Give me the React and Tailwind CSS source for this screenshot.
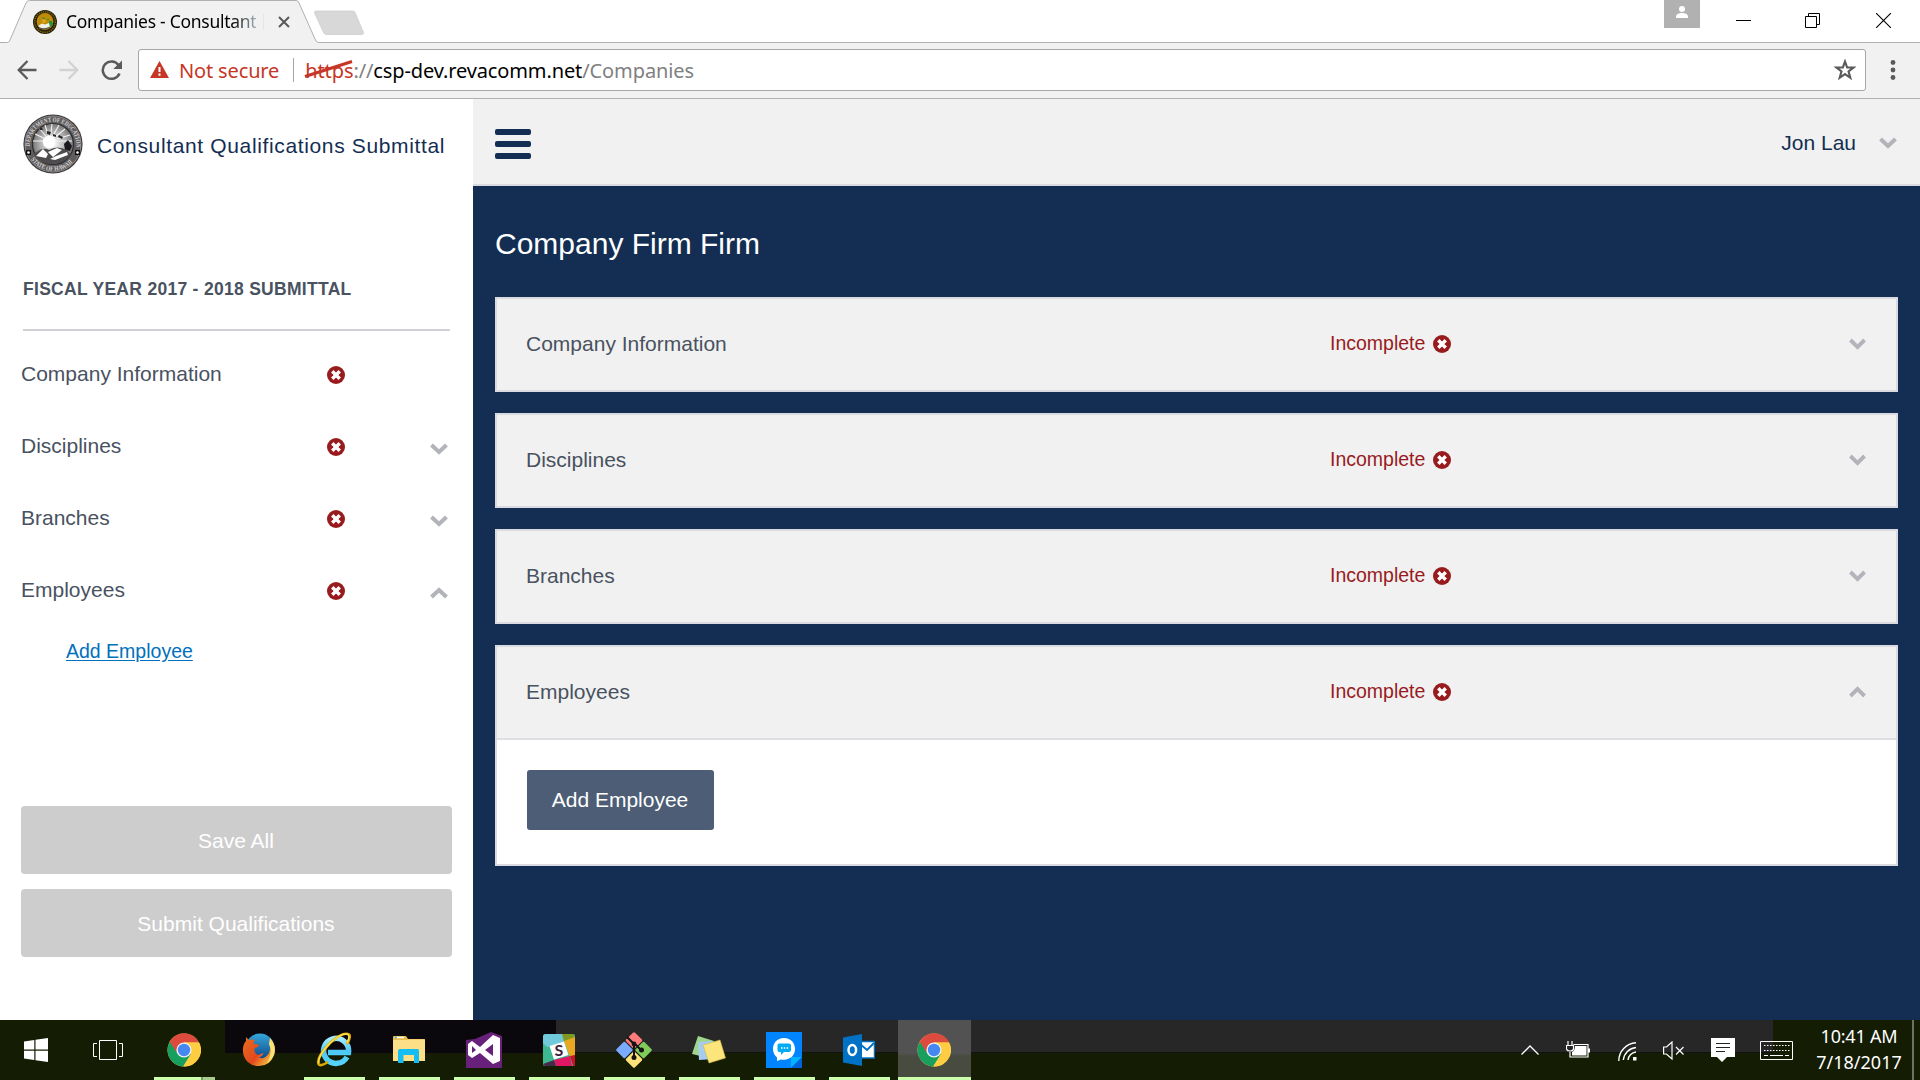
import React from "react";

const sections = [
  { name: "Company Information" },
  { name: "Disciplines", chevron: "down" },
  { name: "Branches", chevron: "down" },
  { name: "Employees", chevron: "up" },
];

function Chevron({ up, width = 18 }) {
  return (
    <svg width={width} height="12" viewBox="0 0 18 12" preserveAspectRatio="none" className={up ? "rotate-180" : ""}>
      <path d="M1.5 2 L9 9 L16.5 2" fill="none" stroke="#b2b4ba" strokeWidth="4" />
    </svg>
  );
}

function ErrorIcon() {
  return (
    <svg width="18" height="18" viewBox="0 0 18 18">
      <circle cx="9" cy="9" r="9" fill="#981b1e" />
      <path d="M5.3 5.3 L12.7 12.7 M12.7 5.3 L5.3 12.7" stroke="#fff" strokeWidth="3.5" />
      <path d="M9 3.6v2M9 12.4v2M3.6 9h2M12.4 9h2" stroke="#981b1e" strokeWidth="1.4" />
    </svg>
  );
}

function Seal() {
  return (
    <svg width="60" height="60" viewBox="0 0 60 60">
      <defs>
        <path id="sealTop" d="M7 34 A23.2 23.2 0 1 1 53 34" />
        <path id="sealBottom" d="M5 40 A27 27 0 0 0 55 40" />
        <radialGradient id="sealSky" cx=".5" cy=".5" r=".55">
          <stop offset="0" stopColor="#fff" />
          <stop offset=".55" stopColor="#b4b4b4" />
          <stop offset="1" stopColor="#666" />
        </radialGradient>
      </defs>
      <circle cx="30" cy="30" r="29.6" fill="#3c3a3b" />
      <circle cx="30" cy="30" r="28" fill="#5f5d5e" stroke="#99979a" strokeWidth=".8" />
      <text fontSize="6.5" fill="#d6d4d6" fontFamily="Liberation Serif, serif" fontWeight="bold">
        <textPath href="#sealTop" startOffset="2" textLength="76" lengthAdjust="spacingAndGlyphs">DEPARTMENT OF EDUCATION</textPath>
      </text>
      <text fontSize="6.5" fill="#d6d4d6" fontFamily="Liberation Serif, serif" fontWeight="bold">
        <textPath href="#sealBottom" startOffset="6" textLength="48" lengthAdjust="spacingAndGlyphs">STATE OF HAWAII</textPath>
      </text>
      <circle cx="30" cy="30" r="20.5" fill="url(#sealSky)" stroke="#2d2b2c" strokeWidth="1.2" />
      <g stroke="#f4f4f4" strokeWidth="1.1">
        <path d="M27 27 L12 20M27 27 L16 14M27 27 L22 11M27 27 L29 10M27 27 L36 11M27 27 L42 15M27 27 L47 21M27 27 L10 27M27 27 L49 27" />
      </g>
      <circle cx="26" cy="28" r="6.2" fill="#fff" />
      <path d="M16 14l3 0 1 2-3 0zM24 17l4 1-1 3-3-1zM30 20l3 1 0 2-3-1zM36 21l4 2-1 2-4-2z" fill="#2a282a" />
      <path d="M41 30 L45 26 L49 32 L47 37 L42 36Z" fill="#1b191b" />
      <path d="M11 40 Q20 32 26 36 Q34 31 44 36 L48 41 Q40 51 26 50 Q14 48 11 40Z" fill="#4d4b4d" />
      <path d="M13 42 L20 35 L25 40 L23 44Z M25 38 L34 34 L39 36 L30 43Z M27 45 L33 42 L44 38 L45 41 L32 46Z" fill="#fff" />
      <rect x="3" y="36" width="5" height="5" fill="#111" />
      <rect x="52" y="36" width="5" height="5" fill="#111" />
      <circle cx="5.5" cy="38.5" r="1.3" fill="#fff" />
      <circle cx="54.5" cy="38.5" r="1.3" fill="#fff" />
    </svg>
  );
}

function Favicon() {
  return (
    <svg width="24" height="24" viewBox="0 0 24 24">
      <circle cx="12" cy="12" r="12" fill="#26200a" />
      <circle cx="12" cy="12" r="10.3" fill="none" stroke="#8a6a14" strokeWidth="1.4" strokeDasharray="1.2 1" />
      <circle cx="12" cy="11.5" r="8.4" fill="#c08c08" />
      <path d="M9 7l3 1 1 2-3-1zM13 9l3 0 0 1.500z" fill="#3d8a2c" />
      <path d="M16 11l3 0 1 3-2 3-2-2z" fill="#23923c" />
      <circle cx="11" cy="11" r="2" fill="#dba51d" />
      <path d="M5 16 L9 13.500 L12 14.500 L16 13 L17 17 Q11 21 5 16Z" fill="#f2f0ea" />
      <path d="M6 18 Q12 20 17 17" stroke="#5b5b5b" strokeWidth="1.200" fill="none" />
    </svg>
  );
}

function TabStrip() {
  return (
    <div className="relative flex h-[43px] items-start bg-white">
      <svg className="absolute left-0 top-0" width="1920" height="43" viewBox="0 0 1920 43">
        <path d="M0 42.500 H7.500 Q9 42.500 10 40 L26 3 Q27 .5 29.500 .5 H296 Q298 .5 299 3 L315.500 40 Q316.500 42.500 318.500 42.500 H1920 V44 H0Z" fill="#f1f1f1" stroke="#b0b0b0" />
        <path d="M316 11 H353 Q354.500 11 355.300 13 L363.500 32.500 Q364 34.500 362 34.500 H326 Q324.500 34.500 323.500 32.500 L314.500 13 Q314 11 316 11Z" fill="#d8d8d8" stroke="#cbcbcb" strokeWidth=".7" />
      </svg>
      <div className="relative flex h-[43px] w-[300px] items-center pl-[33px]">
        <Favicon />
        <span className="ml-[9px] whitespace-nowrap bg-gradient-to-r from-black from-85% to-[#a8b4bc] bg-clip-text font-['Noto_Sans',sans-serif] text-[17.500px] tracking-[-0.27px] text-transparent">Companies - Consultant</span>
        <span className="ml-[7px] h-[16px] w-px bg-[#e6e6e6]" />
        <svg className="absolute left-[278px] top-[16px]" width="12" height="12" viewBox="0 0 12 12">
          <path d="M1 1 L11 11 M11 1 L1 11" stroke="#5a5a5a" strokeWidth="2" />
        </svg>
      </div>
      <div className="relative ml-auto flex items-start">
        <div className="flex h-[28px] w-[36px] justify-center bg-[#b1b1b1] pt-[6px]">
          <svg width="12" height="12" viewBox="0 0 12 12" fill="#fff">
            <circle cx="6" cy="3" r="3" />
            <path d="M0 12 V10 Q1 7 6 7 T12 10 V12Z" />
          </svg>
        </div>
        <svg className="ml-[36px] mt-[13px]" width="15" height="15" viewBox="0 0 15 15"><path d="M0 7.500H15" stroke="#000" /></svg>
        <svg className="ml-[54px] mt-[13px]" width="15" height="15" viewBox="0 0 15 15" fill="none" stroke="#000">
          <path d="M.5 3.500 H11.500 V14.500 H.5Z M3.500 3.500 V.5 H14.500 V11.500 H11.500" />
        </svg>
        <svg className="ml-[56px] mr-[29px] mt-[13px]" width="15" height="15" viewBox="0 0 15 15"><path d="M0 0 L15 15 M15 0 L0 15" stroke="#000" strokeWidth="1.100" /></svg>
      </div>
    </div>
  );
}

function Toolbar() {
  return (
    <div className="flex h-[56px] items-start border-b border-[#b0b0b0] bg-[#f1f1f1] pt-[6px] font-['Noto_Sans',sans-serif] text-[20px]">
      <div className="flex h-[42px] w-[138px] items-center pl-[17px]">
        <svg width="20" height="20" viewBox="0 0 20 20" fill="none" stroke="#5a5a5a" strokeWidth="2.300"><path d="M19.500 10 H2 M10.500 1 L1.700 10 L10.500 19" /></svg>
        <svg className="ml-[22px]" width="20" height="20" viewBox="0 0 20 20" fill="none" stroke="#d2d2d2" strokeWidth="2.300"><path d="M.5 10 H18 M9.500 1 L18.300 10 L9.500 19" /></svg>
        <svg className="ml-[22px]" width="22" height="21" viewBox="0 0 22 21">
          <path d="M17.500 5 A8.700 8.700 0 1 0 18.500 13.500" fill="none" stroke="#5a5a5a" strokeWidth="2.500" />
          <path d="M21 .5 V9 H12.300Z" fill="#5a5a5a" />
        </svg>
      </div>
      <div className="flex h-[42px] w-[1728px] items-center rounded-[3px] border border-[#a6a6a6] bg-white">
        <svg className="mb-px ml-[11px]" width="19" height="17" viewBox="0 0 19 17">
          <path d="M9.500 0 L19 17 H0Z" fill="#c63626" />
          <path d="M9.500 6 V11 M9.500 12.600 V14.800" stroke="#fff" strokeWidth="2" />
        </svg>
        <span className="ml-[10px] mt-[2px] whitespace-nowrap tracking-[-0.15px] text-[#c63626]">Not secure</span>
        <span className="ml-[14px] h-[24px] w-px bg-[#a6a6a6]" />
        <span className="relative ml-[11px] mt-[2px] whitespace-nowrap tracking-[-0.1px] text-[#c63626]">
          https
          <svg className="absolute left-[-1px] top-[4px]" width="49" height="20" viewBox="0 0 49 20"><path d="M1 16.500 L48 1.500" stroke="#c63626" strokeWidth="3" /></svg>
        </span>
        <span className="mt-[2px] tracking-[-0.1px] text-[#808080]">://</span>
        <span className="mt-[2px] tracking-[-0.12px] text-black">csp-dev.revacomm.net</span>
        <span className="mt-[2px] tracking-[-0.1px] text-[#808080]">/Companies</span>
        <svg className="ml-auto mr-[9px]" width="22" height="22" viewBox="0 0 22 22">
          <path d="M11 2.500 L13.100 8.400 L19.500 8.500 L14.500 12.400 L16.300 18.800 L11 15.100 L5.700 18.800 L7.500 12.400 L2.500 8.500 L8.900 8.400Z" fill="none" stroke="#5a5a5a" strokeWidth="2.100" />
        </svg>
      </div>
      <svg className="ml-[24px] mt-[10px]" width="6" height="22" viewBox="0 0 6 22" fill="#5a5a5a">
        <circle cx="3" cy="3.500" r="2.400" /><circle cx="3" cy="11" r="2.400" /><circle cx="3" cy="18.500" r="2.400" />
      </svg>
    </div>
  );
}

function Sidebar() {
  return (
    <aside className="flex w-[473px] flex-col bg-white text-[#495260]">
      <div className="flex h-[90px] items-center pl-[23px]">
        <Seal />
        <span className="ml-[14px] mt-[3px] whitespace-nowrap text-[21px] tracking-[0.640px] text-[#132e52]">Consultant Qualifications Submittal</span>
      </div>
      <div className="ml-[23px] mt-[70px] flex h-[72px] w-[427px] items-center border-b-2 border-[#cfd1d5]">
        <span className="mt-[-9px] whitespace-nowrap text-[17.500px] font-bold tracking-[0.29px]">FISCAL YEAR 2017 - 2018 SUBMITTAL</span>
      </div>
      <nav className="mt-[7px] flex flex-col">
        {sections.map((s) => (
          <div key={s.name} className="flex h-[72px] items-center pl-[21px] text-[21px]">
            <span className="w-[306px]">{s.name}</span>
            <span className="mt-[2px]"><ErrorIcon /></span>
            {s.chevron && <span className="ml-[85px] mt-[5px]"><Chevron up={s.chevron === "up"} /></span>}
          </div>
        ))}
        <a className="ml-[66px] mt-[10px] w-fit text-[19.500px] leading-[30px] text-[#0071bc] underline underline-offset-2">Add Employee</a>
      </nav>
      <div className="mb-[63px] ml-[21px] mt-auto flex w-[431px] flex-col gap-[15px] text-[21px] text-white">
        <button className="h-[68px] rounded-[4px] bg-[#cdcdcd] pr-px pt-px">Save All</button>
        <button className="h-[68px] rounded-[4px] bg-[#cdcdcd] pr-px pt-px">Submit Qualifications</button>
      </div>
    </aside>
  );
}

function Panel({ name, open }) {
  return (
    <section className="border-2 border-[#d9dbe0] bg-white">
      <div className="flex h-[91px] items-center bg-[#f1f1f1] pb-[2px] pl-[29px] pr-[30px] text-[21px] text-[#495260]">
        <span className="w-[804px]">{name}</span>
        <span className="flex items-center text-[#981b1e]">
          <span className="w-[103px] text-[19.500px]">Incomplete</span>
          <ErrorIcon />
        </span>
        <span className="ml-auto"><Chevron up={open} width={17} /></span>
      </div>
      {open && (
        <div className="h-[126px] border-t-2 border-[#dedfe3] pl-[30px] pt-[30px]">
          <button className="h-[60px] w-[187px] rounded-[3px] bg-[#4c5d75] pr-px text-[21px] text-white">Add Employee</button>
        </div>
      )}
    </section>
  );
}

function Main() {
  return (
    <main className="flex flex-1 flex-col bg-[#132e52]">
      <header className="flex h-[87px] items-center justify-between border-b-2 border-[#d9dbe0] bg-[#f1f1f1] pl-[22px] pr-[23px]">
        <div className="mt-[5px] flex w-[36px] flex-col gap-[6px]">
          <span className="h-[6px] rounded-[2px] bg-[#132e52]" />
          <span className="h-[6px] rounded-[2px] bg-[#132e52]" />
          <span className="h-[6px] rounded-[2px] bg-[#132e52]" />
        </div>
        <div className="mt-[3px] flex items-center gap-[23px] text-[21px] text-[#132e52]">
          Jon Lau <Chevron />
        </div>
      </header>
      <div className="pl-[22px] pr-[22px]">
        <h1 className="mt-[35px] w-fit text-[30px] leading-[46px] text-white">Company Firm Firm</h1>
        <div className="mt-[30px] flex flex-col gap-[21px]">
          {sections.map((s) => <Panel key={s.name} name={s.name} open={s.name === "Employees"} />)}
        </div>
      </div>
    </main>
  );
}

function ChromeIcon() {
  return (
    <svg width="34" height="34" viewBox="0 0 34 34">
      <circle cx="17" cy="17" r="16.500" fill="#ffcd42" />
      <path d="M17 17 L2.600 9 A16.500 16.500 0 0 0 16 33.500 L24 21Z" fill="#17a05d" />
      <path d="M2.700 8.700 A16.500 16.500 0 0 1 32 9.500 H17 L10 20Z" fill="#dc4b3e" />
      <path d="M17 9.500 H32.200 A16.500 16.500 0 0 1 16.500 33.500 L24 21Z" fill="#ffcd42" />
      <circle cx="17" cy="17" r="7.600" fill="#f1f1f1" />
      <circle cx="17" cy="17" r="6.200" fill="#4688f1" />
    </svg>
  );
}

function FirefoxIcon() {
  return (
    <svg width="34" height="34" viewBox="0 0 34 34">
      <defs>
        <linearGradient id="ffFox" x1="0" y1="0" x2="1" y2=".7"><stop offset="0" stopColor="#e8701c" /><stop offset=".6" stopColor="#e2481e" /><stop offset="1" stopColor="#f8c63c" /></linearGradient>
        <linearGradient id="ffSky" x1="0" y1="0" x2="0" y2="1"><stop offset="0" stopColor="#35a7dc" /><stop offset="1" stopColor="#0a3c7c" /></linearGradient>
      </defs>
      <circle cx="18" cy="15" r="14.500" fill="url(#ffSky)" />
      <path d="M28 5 Q35 13 32 22 Q28 33 17 33 Q5 33 1.500 22 Q-.5 13 4 8 L4 4 L7 7 Q10 6 13 7 Q11 9 12 11 L17 11.500 Q17 14 13 15 Q11 20 16 22 Q19 21 21 20 Q22 22 17 24.500 Q23 27 27 20 Q30 13 28 5Z" fill="url(#ffFox)" />
      <path d="M28 5 Q35 13 32 22 Q29 28 25 30 Q31 20 27 11Z" fill="#fbe075" />
    </svg>
  );
}

function IEIcon() {
  return (
    <svg width="36" height="36" viewBox="0 0 36 36">
      <defs><linearGradient id="ieBlue" x1="0" y1="0" x2="0" y2="1"><stop offset="0" stopColor="#a5ecff" /><stop offset=".5" stopColor="#4cc8f6" /><stop offset="1" stopColor="#55d3fb" /></linearGradient></defs>
      <path d="M31 25 A12.500 12.500 0 1 1 32.500 20.500 H12" fill="none" stroke="url(#ieBlue)" strokeWidth="5.500" />
      <path d="M31 12 Q36 3 32 2 Q26 0 14 11 Q0 26 2.500 32 Q4 35 12 30" fill="none" stroke="#d8a900" strokeWidth="2.600" />
      <path d="M31 11 Q35 3 31 2 Q25 1 14 11 Q1 25 3 31.500" fill="none" stroke="#ffe052" strokeWidth="1.500" />
    </svg>
  );
}

function FolderIcon() {
  return (
    <svg width="32" height="28" viewBox="0 0 32 28">
      <path d="M0 1 Q0 0 1 0 H13 L15 3 H31 Q32 3 32 4 V25 H0Z" fill="#e9bd4a" />
      <path d="M0 4 H13 L15 3.500 H32 V25 H0Z" fill="#fddf88" />
      <path d="M3 1.500h8" stroke="#fff" strokeWidth="1.500" /><path d="M2 1.500h2" stroke="#3bbcf0" strokeWidth="1.500" />
      <path d="M5 27 V15 Q5 13 7 13 H25 Q26 13 26 15 V27 H21 V19 H10.500 V27Z" fill="#16bdf2" />
    </svg>
  );
}

function VisualStudioIcon() {
  return (
    <svg width="36" height="36" viewBox="0 0 36 36">
      <path d="M0 8 L9 7 L25 0 L36 4 V36 H0Z" fill="#68217a" />
      <path fillRule="evenodd" d="M2 12 L6 9 L14 15 L27 3 L34 6 V29 L27 32 L14 21 L6 26 L2 23Z M6 14 V21 L10 18Z M27 12 L19 18 L27 24Z" fill="#fff" />
    </svg>
  );
}

function SlackIcon() {
  return (
    <svg width="32" height="32" viewBox="0 0 32 32">
      <rect width="32" height="32" rx="2" fill="#3eb890" />
      <path d="M2 0 H20 L22 8 L4 13 L0 9 V2Z" fill="#70cadb" />
      <path d="M19 0 H30 L32 3 L21 8Z" fill="#7f9a22" />
      <path d="M21 7 L32 3 V21 L27 23Z" fill="#e9a820" />
      <path d="M11 26 L27 22 L29 32 H13Z" fill="#e01765" />
      <path d="M27 22 L32 21 V32 H30Z" fill="#c81421" />
      <path d="M0 30 L11 26 L13 32 H2Z" fill="#472a49" />
      <path d="M6.500 12 L21 7.500 L25.500 21 L11 25.500Z" fill="#fff" />
      <text x="16" y="22" textAnchor="middle" fontSize="16" fontWeight="bold" fontFamily="Lato, sans-serif" fill="#3c1c3d">S</text>
    </svg>
  );
}

function GitIcon() {
  return (
    <svg width="36" height="36" viewBox="0 0 36 36">
      <g transform="rotate(45 18 18)">
        <rect x="5" y="5" width="12.400" height="12.400" rx="1.500" fill="#ff7b7b" />
        <rect x="18.600" y="5" width="12.400" height="12.400" rx="1.500" fill="#80cc5a" />
        <rect x="5" y="18.600" width="12.400" height="12.400" rx="1.500" fill="#7aabff" />
        <rect x="18.600" y="18.600" width="12.400" height="12.400" rx="1.500" fill="#ffe27a" />
      </g>
      <path d="M11 5 L18 12 V25 M18 11 L25 18" fill="none" stroke="#141414" strokeWidth="2" />
      <circle cx="18" cy="12" r="2.400" fill="#141414" /><circle cx="18" cy="25.500" r="2.500" fill="#141414" /><circle cx="25.500" cy="18" r="2.500" fill="#141414" />
    </svg>
  );
}

function StickyIcon() {
  return (
    <svg width="34" height="28" viewBox="0 0 34 28">
      <path d="M6 0 L22 5 L17 22 L0 18Z" fill="#a0d68c" />
      <path d="M6 6 L20 5 L22 23 L7 24Z" fill="#a6cdf0" />
      <path d="M11 9 L28 4 L33.500 22 L17 27Z" fill="#fce57a" stroke="#d5b748" strokeWidth=".6" />
    </svg>
  );
}

function ChatIcon() {
  return (
    <svg width="36" height="36" viewBox="0 0 36 36">
      <rect width="36" height="36" fill="#0084ff" />
      <path d="M25 36 V25 H36Z" fill="#00b2ff" /><path d="M25 36 L36 25 V36Z" fill="#0064d8" />
      <path d="M18 6 C11 6 7 11 7 17 C7 21 9 24 11 25.500 V29 L15 27.500 C24 29 29 23 29 17 C29 11 25 6 18 6Z" fill="#fff" />
      <path d="M13 11.500 H23 Q25 11.500 25 13.500 V18 Q25 20 23 20 H18 L15 23 V20 H13 Q11.500 20 11.500 18 V13.500 Q11.500 11.500 13 11.500Z" fill="#00aaf5" />
      <path d="M15 16h1.500M17.800 16h1.500M20.600 16h1.500" stroke="#fff" strokeWidth="1.500" />
    </svg>
  );
}

function OutlookIcon() {
  return (
    <svg width="32" height="32" viewBox="0 0 32 32">
      <rect x="16" y="7.500" width="15.500" height="16.500" fill="#fff" stroke="#0072c6" strokeWidth="1.500" />
      <path d="M17 10 L24 16 L31 9" fill="none" stroke="#0072c6" strokeWidth="2" />
      <path d="M0 3.500 L19 0 V32 L0 28.500Z" fill="#0072c6" />
      <ellipse cx="9.300" cy="16" rx="3.800" ry="4.900" fill="none" stroke="#fff" strokeWidth="2.500" />
    </svg>
  );
}

const apps = [
  { id: "chrome", icon: <ChromeIcon />, bar: "stack" },
  { id: "firefox", icon: <FirefoxIcon /> },
  { id: "ie", icon: <IEIcon />, bar: "full" },
  { id: "files", icon: <FolderIcon />, bar: "full" },
  { id: "vs", icon: <VisualStudioIcon />, bar: "full" },
  { id: "slack", icon: <SlackIcon />, bar: "full" },
  { id: "git", icon: <GitIcon />, bar: "full" },
  { id: "notes", icon: <StickyIcon />, bar: "full" },
  { id: "chat", icon: <ChatIcon />, bar: "full" },
  { id: "outlook", icon: <OutlookIcon />, bar: "full" },
  { id: "chrome-active", icon: <ChromeIcon />, bar: "active" },
];

function Taskbar() {
  return (
    <footer className="relative flex h-[60px] bg-[#141c04] text-white">
      <div className="absolute left-[225px] top-0 h-[33px] w-[331px] bg-[#0a080c]" />
      <div className="absolute left-[556px] top-0 h-[33px] w-[1217px] border-b border-[#121212] bg-[#272727]" />
      <div className="relative flex w-[147px] items-center">
        <svg className="ml-[24px]" width="24" height="24" viewBox="0 0 24 24" fill="#fff">
          <path d="M0 3.500 L10.300 2 V11.500 H0Z M11.500 1.800 L24 0 V11.500 H11.500Z M0 12.700 H10.300 V22 L0 20.500Z M11.500 12.700 H24 V24 L11.500 22.200Z" />
        </svg>
        <svg className="ml-[45px]" width="30" height="20" viewBox="0 0 30 20" fill="none" stroke="#fff">
          <path d="M6.500 .5 H23.500 V19.500 H6.500Z M4 3.500 H.5 V16.500 H4 M26 3.500 H29.500 V16.500 H26" />
        </svg>
      </div>
      <div className="relative flex">
        {apps.map((a) => (
          <div key={a.id} className={a.bar === "active" ? "ml-px flex h-[60px] w-[73px] flex-col bg-gradient-to-b from-[#525252] from-55% to-[#484c40] to-60%" : "flex h-[60px] w-[75px] flex-col px-[7px]"}>
            <div className="flex h-[57px] items-center justify-center pr-[2px] pt-[3px]">{a.icon}</div>
            {a.bar && (a.bar === "stack" ? (
              <div className="flex h-[3px]"><span className="w-[47px] bg-[#ccffab]" /><span className="w-[2px] bg-[#7b9a68]" /><span className="flex-1 bg-[#a8cc8e]" /></div>
            ) : <div className="h-[3px] bg-[#ccffab]" />)}
          </div>
        ))}
      </div>
      <div className="relative ml-auto flex h-[60px] items-center pr-[6px]">
        <svg width="18" height="10" viewBox="0 0 18 10" fill="none" stroke="#fff" strokeWidth="1.300"><path d="M.5 9.500 L9 1 L17.500 9.500" /></svg>
        <svg className="ml-[27px]" width="24" height="18" viewBox="0 0 24 18" fill="none" stroke="#fff" strokeWidth="1.200">
          <path d="M8 4 V3.500 H22 V16 H4 V11 M2 0 V4 M6 0 V4 M.5 4.500 H7.500 V8 Q7 10 4 10 Q1 10 .5 8Z" />
          <path d="M9 5 H20.500 V14.500 H6 V11 Q9 10 9 5Z M22 7.500h2v4h-2z" fill="#fff" stroke="none" />
        </svg>
        <svg className="ml-[28px] mt-[2px]" width="19" height="19" viewBox="0 0 19 19" fill="none" stroke="#fff" strokeWidth="1.400">
          <path d="M.8 19 A18 18 0 0 1 18 .8 M5.300 18 A14 14 0 0 1 18 5.500 M10 18 A9 9 0 0 1 18 10" /><path d="M15 15h3.500v3.500H15z" fill="#fff" stroke="none" />
        </svg>
        <svg className="ml-[26px]" width="22" height="19" viewBox="0 0 22 19" fill="none" stroke="#fff" strokeWidth="1.200">
          <path d="M.6 6 H3.500 L9 1 V18 L3.500 13 H.6Z M13 6 L20.500 13.500 M20.500 6 L13 13.500" />
        </svg>
        <svg className="ml-[26px]" width="24" height="24" viewBox="0 0 24 24">
          <path d="M0 0 H24 V19 H16 L11 24 L6 19 H0Z" fill="#fff" /><path d="M5 5.500H19M5 9.500H19M5 13.500H14" stroke="#222" />
        </svg>
        <svg className="ml-[25px]" width="33" height="19" viewBox="0 0 33 19" fill="none" stroke="#fff">
          <path d="M.5 .5 H32.500 V18.500 H.5Z" /><path d="M4 4.500H30M4 9.500H30" strokeDasharray="1.500 1.500" /><path d="M4 14.500H8M10 14.500H23M25 14.500H29" />
        </svg>
        <div className="mb-[2px] ml-[22px] flex w-[88px] flex-col items-center font-['Noto_Sans',sans-serif] text-[18px] leading-[26px]">
          <span className="whitespace-nowrap tracking-[-0.2px]">10:41 AM</span>
          <span className="whitespace-nowrap">7/18/2017</span>
        </div>
        <div className="ml-[9px] h-[60px] w-[2px] bg-[#6c7263]" />
      </div>
    </footer>
  );
}

export default function App() {
  return (
    <div className="flex h-[1080px] w-[1920px] flex-col overflow-hidden bg-white font-['Liberation_Sans',Arial,sans-serif]">
      <TabStrip />
      <Toolbar />
      <div className="flex h-[921px]">
        <Sidebar />
        <Main />
      </div>
      <Taskbar />
    </div>
  );
}
